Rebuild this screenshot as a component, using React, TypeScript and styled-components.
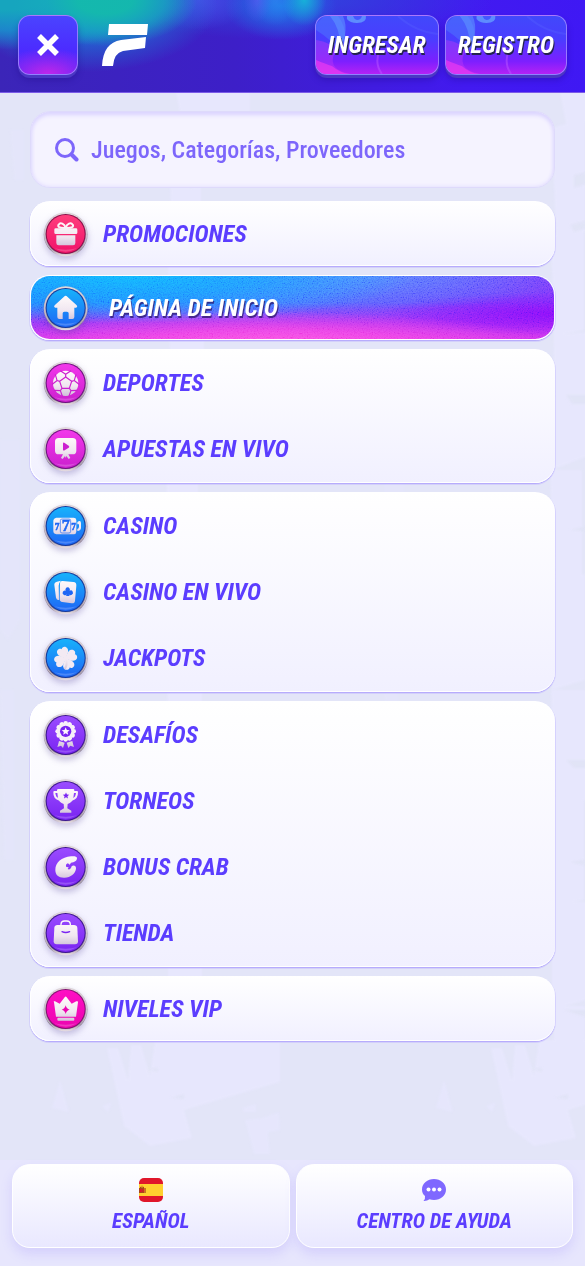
import React, { ReactNode, useId } from 'react';
import styled, { createGlobalStyle, css } from 'styled-components';

const GlobalStyle = createGlobalStyle`
  *, *::before, *::after { box-sizing: border-box; }
  body {
    margin: 0;
    background: #e3e5f8;
    font-family: 'Roboto Condensed', Roboto, sans-serif;
    color: #5b3dff;
  }
  button, input { font: inherit; color: inherit; }
  svg { display: block; flex: none; }
`;

const Page = styled.div`
  position: relative;
  z-index: 0;
  display: flex;
  flex-direction: column;
  min-height: 100vh;
`;

const Backdrop = styled.svg`
  position: absolute;
  inset: 0;
  width: 100%;
  height: 100%;
  z-index: -1;
`;

const Header = styled.header`
  display: flex;
  align-items: center;
  gap: 6px;
  padding: 15px 18px 17px;
  border-bottom: 1px solid #7b5be8;
  background:
    radial-gradient(ellipse 22px 26px at 47% 0, rgba(50, 140, 245, 0.5), transparent),
    radial-gradient(ellipse 22px 26px at 52% 0, rgba(20, 190, 215, 0.85), transparent),
    radial-gradient(ellipse 14px 22px at 44% 0, rgba(90, 85, 240, 0.7), transparent),
    radial-gradient(ellipse 56px 34px at 48% 6px, rgba(26, 130, 232, 0.85), transparent),
    radial-gradient(ellipse 92px 46px at 18% 0, rgba(20, 186, 172, 0.95) 30%, rgba(22, 172, 188, 0.7) 65%, transparent),
    radial-gradient(ellipse 180px 50px at 1% 0, rgba(22, 165, 190, 1) 20%, rgba(24, 150, 205, 0.8) 60%, transparent),
    radial-gradient(ellipse 130px 68px at 15% 4px, rgba(28, 120, 215, 0.9) 40%, transparent),
    radial-gradient(ellipse 50px 30px at 34% 0, rgba(75, 80, 235, 0.8), transparent),
    radial-gradient(ellipse 200px 40px at 50% 0, rgba(45, 80, 225, 0.8), transparent),
    linear-gradient(90deg, #3b25b8, #3d1fc8 40%, #421af0 80%, #3f18f4);
`;

const keycap = css`
  height: 60px;
  border: 1px solid rgba(170, 150, 255, 0.75);
  border-radius: 12px;
  box-shadow: 0 3px 0 #4a38c4, 0 5px 6px rgba(30, 10, 130, 0.35);
  color: #fff;
  cursor: pointer;
`;

const CloseButton = styled.button`
  ${keycap}
  display: grid;
  place-items: center;
  width: 60px;
  padding: 0;
  margin-right: 18px;
  background:
    radial-gradient(ellipse 50px 26px at 50% 100%, #c026ea, rgba(160, 38, 240, 0.6) 55%, transparent),
    linear-gradient(#4a44ff, #4c2bff 60%, #5a28fa);
`;

const HomeLink = styled.a`
  margin-right: auto;
`;

const AccountButton = styled.button`
  ${keycap}
  position: relative;
  padding: 0 12px;
  font-size: 24px;
  font-weight: 700;
  font-style: italic;
  text-shadow: 1px 2px 0 #24224f;
  background: linear-gradient(#4149fb, #4a3dff 40%, #7c1fff 78%, #b422f4);
`;

const Waves = styled.svg`
  position: absolute;
  inset: 0;
  width: 100%;
  height: 100%;
  border-radius: 11px;
`;

const ButtonText = styled.span`
  position: relative;
`;

const Menu = styled.main`
  display: flex;
  flex-direction: column;
  gap: 9px;
  padding: 18px 30px 24px;
`;

const SearchField = styled.label`
  display: flex;
  align-items: center;
  gap: 12px;
  height: 77px;
  margin-bottom: 4px;
  padding: 0 24px;
  border: 1px solid #dedafb;
  border-radius: 20px;
  background: #f5f3ff;
  box-shadow: inset 0 3px 4px #dcd5ff, inset 0 0 4px #dfd9ff;
  color: #7d66fb;
`;

const SearchInput = styled.input`
  flex: 1;
  min-width: 0;
  padding: 0;
  border: 0;
  outline: 0;
  background: none;
  font-size: 24px;
  font-weight: 500;
  &::placeholder { color: inherit; opacity: 1; }
`;

const Group = styled.nav`
  padding: 1px 0;
  border-radius: 20px;
  background: linear-gradient(#fff, #f1f0ff);
  box-shadow: inset 1px 0 0 #fff, inset 0 -1px 0 #fff, 0 1px 0 1px rgba(180, 168, 255, 0.35), 0 1px 0 #b9aefa;
`;

const ItemLink = styled.a<{ $single?: boolean; $active?: boolean }>`
  position: relative;
  display: flex;
  align-items: center;
  gap: 15px;
  height: ${p => (p.$single ? 63 : 66)}px;
  padding: 0 14px;
  font-size: 24px;
  line-height: 28px;
  font-weight: 700;
  font-style: italic;
  text-decoration: none;
  color: #5b3dff;
  ${p => p.$active && css`
    gap: 21px;
    margin: 0 1px;
    padding: 0 13px;
    border-radius: 19px;
    color: #fff;
    text-shadow: 1px 2px 0 rgba(45, 20, 110, 0.75);
    background:
      radial-gradient(ellipse 55% 55% at 46% 112%, #ff58e0, rgba(246, 70, 228, 0.8) 50%, transparent),
      radial-gradient(ellipse 55% 75% at 18% 0, #12b4ff, rgba(20, 165, 255, 0.75) 45%, transparent),
      radial-gradient(ellipse 45% 55% at 60% 0, rgba(85, 135, 255, 0.9), transparent),
      radial-gradient(ellipse 34% 34% at 100% 60%, #8510fb, transparent),
      linear-gradient(transparent 42%, rgba(185, 38, 242, 0.75) 75%, #cf33ee),
      linear-gradient(90deg, #2a6cff, #4b66ff 45%, #7a38fb);
  `}
`;

const ItemText = styled.span`
  position: relative;
`;

const GrainLayer = styled.svg`
  position: absolute;
  inset: 0;
  width: 100%;
  height: 100%;
  border-radius: 19px;
  opacity: 0.22;
  mix-blend-mode: overlay;
`;

const Badge = styled.svg`
  position: relative;
  width: 44px;
  height: 44px;
  overflow: visible;
  filter: drop-shadow(0 3px 3px rgba(70, 50, 140, 0.28));
`;

const Footer = styled.footer`
  display: grid;
  grid-template-columns: 1fr 1fr;
  gap: 6px;
  margin-top: auto;
  padding: 4px 12px 18px;
  background: #e7e6fd;
`;

const FooterButton = styled.button`
  display: flex;
  flex-direction: column;
  align-items: center;
  gap: 7px;
  height: 84px;
  padding: 13px 0 0;
  border: 1px solid #fff;
  border-radius: 18px;
  background: linear-gradient(#fff, #e9e8ff);
  box-shadow: 0 6px 12px rgba(140, 120, 250, 0.2);
  font-size: 21px;
  line-height: 24px;
  font-weight: 700;
  font-style: italic;
  cursor: pointer;
`;

const palettes = {
  red: ['#ff3d7c', '#f0136a', '#8c0d48'],
  blue: ['#17b2fb', '#1f66f5', '#153a9c'],
  magenta: ['#f238ea', '#cc20cf', '#6f1180'],
  violet: ['#9a4cff', '#7a24f2', '#3d1690'],
  pink: ['#ff0fc4', '#ec04b0', '#851070'],
};
type Tone = keyof typeof palettes;

/* Round metal badge. Glyphs are drawn on a 132-unit square centred on 0,0. */
function RoundIcon({ tone, children }: { tone: Tone; children: (light: string, dark: string) => ReactNode }) {
  const id = useId().replace(/[^a-zA-Z0-9]/g, '');
  const [top, bottom, edge] = palettes[tone];
  return (
    <Badge viewBox="-65 -67 132 132" aria-hidden="true">
      <defs>
        <linearGradient id={`r${id}`} x1="0" y1="0" x2="0" y2="1">
          <stop offset="0" stopColor="#dcd3d6" />
          <stop offset="0.5" stopColor="#b3a8ba" />
          <stop offset="0.85" stopColor="#8d8094" />
          <stop offset="1" stopColor="#e9e0e6" />
        </linearGradient>
        <linearGradient id={`f${id}`} x1="0" y1="0" x2="0" y2="1">
          <stop offset="0" stopColor={top} />
          <stop offset="1" stopColor={bottom} />
        </linearGradient>
        <linearGradient id={`g${id}`} gradientUnits="userSpaceOnUse" x1="0" y1="-38" x2="0" y2="38">
          <stop offset="0" stopColor="#fffafa" />
          <stop offset="0.6" stopColor="#f0e6f0" />
          <stop offset="1" stopColor="#cfc0d8" />
        </linearGradient>
      </defs>
      <circle r="66" fill={`url(#r${id})`} />
      <circle r="63" fill="none" stroke="#e8dfe2" strokeWidth="2" opacity="0.8" />
      <circle r="60" cy="-1" fill={edge} />
      <circle r="57" cy="-1" fill={`url(#f${id})`} />
      <path d="M-34 42Q0 62 34 42 0 50-34 42Z" fill="#fff" opacity="0.2" />
      {children(`url(#g${id})`, bottom)}
    </Badge>
  );
}

const star = 'M0-12 3.5-4 12-3.5 5.5 2 7.5 10.500 0 6-7.500 10.500-5.500 2-12-3.500-3.500-4Z';

const GiftIcon = () => (
  <RoundIcon tone="red">{light => <>
    <path d="M0-19C-20-18-25-23-21-29-16-37-4-32 0-19 4-32 16-37 21-29 25-23 20-18 0-19Z" fill="none" stroke={light} strokeWidth="6" />
    <rect x="-34" y="-18" width="69" height="17" rx="4" fill={light} />
    <path d="M-28 3H29V26Q29 33 22 33H-21Q-28 33-28 26Z" fill={light} />
  </>}</RoundIcon>
);
const HomeIcon = () => (
  <RoundIcon tone="blue">{light => (
    <path d="M-5-35Q0-40 5-35L33-9Q37-3 31-2H26V26Q26 32 20 32H9V15Q9 10 4 10H-4Q-9 10-9 15V32H-19Q-25 32-25 26V-2H-31Q-37-3-33-9Z" fill={light} />
  )}</RoundIcon>
);
const BallIcon = () => (
  <RoundIcon tone="magenta">{(light, dark) => <>
    <circle r="38" fill={light} />
    <g fill="none" stroke={dark} strokeWidth="3.500" strokeLinejoin="round">
      <path d="M0-19 18-6 11 15H-11L-18-6Z" />
      {[0, 72, 144, 216, 288].map(angle => (
        <path key={angle} d="M0-19V-27L-16-38M0-27 16-38" transform={`rotate(${angle})`} />
      ))}
    </g>
  </>}</RoundIcon>
);
const LiveIcon = () => (
  <RoundIcon tone="magenta">{(light, dark) => <>
    <path d="M-21-34H21Q32-34 32-23V4Q32 15 21 15H8L14 26 9 29 2 20 0 26-2 20-9 29-14 26-8 15H-21Q-32 15-32 4V-23Q-32-34-21-34Z" fill={light} />
    <path d="M-8-17Q-8-22-3-19L9-11Q13-8 9-5L-3 3Q-8 5-8 1Z" fill={dark} />
  </>}</RoundIcon>
);
const SlotsIcon = () => (
  <RoundIcon tone="blue">{(light, dark) => <>
    <path d="M-28-26H24Q31-26 32-19V16Q31 24 24 24H-28Q-37 22-37 14V-16Q-37-24-28-26Z" fill={light} />
    <path d="M35-13Q46-20 46-9V4Q46 12 35 14V8Q40 6 40 1V-6H35Z" fill={light} />
    <rect x="-16" y="-22" width="31" height="42" rx="5" fill={light} stroke={dark} strokeWidth="2" />
    <g fill={dark} stroke={dark} strokeWidth="1.500" fontFamily="'Liberation Serif', serif" fontWeight="700" fontStyle="normal" textAnchor="middle">
      <text x="-26" y="10" fontSize="28">7</text>
      <text x="0" y="15" fontSize="48">7</text>
      <text x="24" y="10" fontSize="28">7</text>
    </g>
  </>}</RoundIcon>
);
const CardsIcon = () => (
  <RoundIcon tone="blue">{(light, dark) => <>
    <path d="M-26-32-14-35Q-20-30-21-20L-20 23Q-27 24-29 16L-34-22Q-35-30-26-32Z" fill={light} />
    <path d="M-9-34 23-31Q33-30 32-20L28 25Q27 34 18 33L-10 29Q-18 28-18 20L-17-26Q-17-35-9-34Z" fill={light} />
    <path d="M6-15A7 7 0 0 1 12-5 7 7 0 1 1 9 5L12 11H1L4 5A7 7 0 1 1 0-5 7 7 0 0 1 6-15Z" fill={dark} />
  </>}</RoundIcon>
);
const CloverIcon = () => (
  <RoundIcon tone="blue">{light => <>
    {[-24, 66, 156, 246].map(angle => (
      <path key={angle} transform={`rotate(${angle})`} d="M-2 2C-4-7-19-13-17-25-15-35-4-36 0-30 4-36 15-35 17-25 19-13 4-7 2 2Z" fill="#f3eaf3" />
    ))}
    <path d="M-1 2Q3 18-6 31L0 34Q9 18 4 4Z" fill={light} />
  </>}</RoundIcon>
);
const MedalIcon = () => (
  <RoundIcon tone="violet">{(light, dark) => <>
    <path d="M-20 17-3 22-8 38-14 31-25 35Q-22 26-20 17ZM20 17 3 22 8 38 14 31 25 35Q22 26 20 17Z" fill={light} />
    <g transform="translate(0 -12)">
      {Array.from({ length: 12 }, (_, i) => (
        <circle key={i} r="7" cy="-24" transform={`rotate(${i * 30})`} fill="#fbf4fa" />
      ))}
      <circle r="26" fill="#f7eff8" />
      <circle r="17" fill={dark} />
      <path d={star} fill="#fff8fc" />
    </g>
  </>}</RoundIcon>
);
const TrophyIcon = () => (
  <RoundIcon tone="violet">{(light, dark) => <>
    <path d="M-22-28H-34Q-35-9-18-5M22-28H34Q35-9 18-5" fill="none" stroke={light} strokeWidth="6" strokeLinejoin="round" />
    <path d="M-22-37H23Q26-37 26-33L23-10Q20 3 6 8L5 21 17 28V34H-17V28L-5 21-6 8Q-20 3-23-10L-26-33Q-26-37-22-37Z" fill={light} />
    <path d={star} fill={dark} transform="translate(1 -17) scale(.8)" />
  </>}</RoundIcon>
);
const ClawIcon = () => (
  <RoundIcon tone="violet">{light => (
    <path d="M34-27C34-33 26-34 16-33-12-31-31-14-31 8-31 24-20 32-3 31 15 30 29 19 31 4 32-5 23-8 18-3 16 4 11 9 6 5L9 0 2-1C-1-6 2-11 7-12L12-8 16-14C26-14 34-20 34-27Z" fill={light} />
  )}</RoundIcon>
);
const BagIcon = () => (
  <RoundIcon tone="violet">{(light, dark) => <>
    <path d="M-14-22V-28Q-13-37-4-37H4Q13-37 14-28V-22" fill="none" stroke={light} strokeWidth="4" />
    <path d="M-25-25H25Q34-25 35-17L37 24Q37 33 28 33H-27Q-36 33-36 24L-34-17Q-33-25-25-25Z" fill={light} />
    <path d="M-11-5Q0 0 12-5" fill="none" stroke={dark} strokeWidth="4" strokeLinecap="round" />
  </>}</RoundIcon>
);
const CrownIcon = () => (
  <RoundIcon tone="pink">{(light, dark) => <>
    <path d="M-35-21Q-38-26-32-24L-18-17-3-36Q0-41 3-36L18-17 32-24Q38-26 37-21L31 22H-29Z" fill={light} />
    <path d="M0-12Q2-2 12 1 2 3 0 14-2 3-12 1-2-2 0-12Z" fill={dark} />
    <rect x="-25" y="25" width="51" height="9" rx="3" fill={light} />
  </>}</RoundIcon>
);

type Entry = { label: string; Icon: () => ReactNode };
const groups: { name: string; active?: boolean; entries: Entry[] }[] = [
  { name: 'Promociones', entries: [{ label: 'PROMOCIONES', Icon: GiftIcon }] },
  { name: 'Inicio', active: true, entries: [{ label: 'PÁGINA DE INICIO', Icon: HomeIcon }] },
  { name: 'Deportes', entries: [
    { label: 'DEPORTES', Icon: BallIcon },
    { label: 'APUESTAS EN VIVO', Icon: LiveIcon },
  ] },
  { name: 'Casino', entries: [
    { label: 'CASINO', Icon: SlotsIcon },
    { label: 'CASINO EN VIVO', Icon: CardsIcon },
    { label: 'JACKPOTS', Icon: CloverIcon },
  ] },
  { name: 'Recompensas', entries: [
    { label: 'DESAFÍOS', Icon: MedalIcon },
    { label: 'TORNEOS', Icon: TrophyIcon },
    { label: 'BONUS CRAB', Icon: ClawIcon },
    { label: 'TIENDA', Icon: BagIcon },
  ] },
  { name: 'VIP', entries: [{ label: 'NIVELES VIP', Icon: CrownIcon }] },
];

const BrushBackdrop = () => (
  <Backdrop aria-hidden="true">
    <defs>
      <filter id="rough"><feGaussianBlur stdDeviation="1" /></filter>
      <pattern id="brush" width="384" height="1180" patternUnits="userSpaceOnUse">
        <g fill="#e7e7fd" filter="url(#rough)">
          <path d="M176 92H250V118L182 124ZM168 128 201 118V232L172 240ZM167 235 200 230V330L170 336ZM170 335 204 332V456L168 470ZM166 470H198V575L170 580ZM168 580 201 574V680L168 690ZM167 690H202V800L170 804ZM168 802 200 796V900L166 906ZM168 902H202V1000L168 1010ZM170 1006H201V1040H170Z" />
          <path d="M155 1040H280V1082L184 1110 192 1138 150 1146 124 1126 107 1048H118L128 1080 131 1045H141L150 1076Z" />
          <path d="M60 1080 69 1112 52 1108ZM245 1120 262 1118 279 1112 280 1130 268 1132 270 1154H254ZM242 1108 256 1104V1112H244ZM102 1106 112 1102 108 1112Z" opacity="0.7" />
          <path d="M0 440H20V620L8 640 0 630ZM10 130H24V180H14ZM0 690H14V860H4Z" opacity="0.4" />
        </g>
        <g fill="#dfe2f4" opacity="0.7" filter="url(#rough)">
          <path d="M190 175 216 168V180L190 188ZM186 225 210 218V226L190 232ZM182 395H210V404H188ZM186 530 210 524V532ZM182 760H214V768H190ZM186 862 210 858V868ZM180 1010H210V1020ZM171 1098 184 1094V1099ZM148 1069 158 1068V1072Z" />
        </g>
      </pattern>
    </defs>
    <rect width="100%" height="100%" fill="url(#brush)" />
  </Backdrop>
);

const Grain = () => (
  <GrainLayer aria-hidden="true">
    <filter id="grain">
      <feTurbulence type="fractalNoise" baseFrequency="0.8" numOctaves="2" />
      <feColorMatrix type="matrix" values="2 0 0 0 -0.5  2 0 0 0 -0.5  2 0 0 0 -0.5  0 0 0 0 1" />
    </filter>
    <rect width="100%" height="100%" filter="url(#grain)" />
  </GrainLayer>
);

const ButtonWaves = () => (
  <Waves viewBox="0 0 122 58" preserveAspectRatio="none" aria-hidden="true">
    <path d="M8 0H22Q30 10 29 23 28 30 23 35 16 24 0 14V8Z" fill="#4f86ff" opacity="0.4" />
    <path d="M14 0H27Q31 8 29 20L25 32Q24 12 14 0Z" fill="#62a0ff" opacity="0.5" />
    <path d="M31 0H50Q51 7 41 7 34 7 31 3Z" fill="#69a9ff" opacity="0.7" />
    <path d="M37 0H46Q45 4 41 4 38 3 37 0Z" fill="#4457ff" />
    <path d="M0 24Q16 26 19 36 14 46 20 52 26 57 36 58H0Z" fill="#c23cf5" opacity="0.4" />
    <path d="M0 44Q10 48 16 50 24 57 34 58H0Z" fill="#f03bf0" opacity="0.65" />
    <path d="M64 34Q58 47 66 58" fill="none" stroke="#ba55ff" strokeWidth="2" opacity="0.5" />
    <path d="M82 0Q100 16 122 18" fill="none" stroke="#5866ff" strokeWidth="2" opacity="0.3" />
  </Waves>
);

export default function App() {
  return (
    <Page>
      <GlobalStyle />
      <BrushBackdrop />
      <Header>
        <CloseButton type="button" aria-label="Cerrar menú">
          <svg width="24" height="24" viewBox="0 0 24 24" aria-hidden="true">
            <path d="M3 3 21 21M21 3 3 21" stroke="#fff" strokeWidth="5.500" />
          </svg>
        </CloseButton>
        <HomeLink href="#inicio" aria-label="Inicio">
          <svg width="46" height="42" viewBox="0 0 46 42" fill="#fff" aria-hidden="true">
            <path d="M7 0H46L45 11H6Z" />
            <path d="M44 13 43 24 21 27Q12 29 11 42H0C1 26 7 18 19 16Z" />
          </svg>
        </HomeLink>
        <AccountButton type="button"><ButtonWaves /><ButtonText>INGRESAR</ButtonText></AccountButton>
        <AccountButton type="button"><ButtonWaves /><ButtonText>REGISTRO</ButtonText></AccountButton>
      </Header>

      <Menu>
        <SearchField>
          <svg width="24" height="24" viewBox="0 0 24 24" fill="none" stroke="currentColor" aria-hidden="true">
            <circle cx="10" cy="10" r="8.500" strokeWidth="3" />
            <path d="M16.500 16.500 21.500 21.500" strokeWidth="4" strokeLinecap="round" />
          </svg>
          <SearchInput type="text" aria-label="Buscar" placeholder="Juegos, Categorías, Proveedores" />
        </SearchField>
        {groups.map(({ name, active, entries }) => (
          <Group key={name} aria-label={name}>
            {entries.map(({ label, Icon }) => (
              <ItemLink key={label} href="#" $single={entries.length === 1} $active={active} aria-current={active ? 'page' : undefined}>
                {active && <Grain />}
                <Icon />
                <ItemText>{label}</ItemText>
              </ItemLink>
            ))}
          </Group>
        ))}
      </Menu>

      <Footer>
        <FooterButton type="button">
          <svg width="24" height="24" viewBox="0 0 24 24" aria-hidden="true">
            <clipPath id="flag"><rect width="24" height="24" rx="5" /></clipPath>
            <g clipPath="url(#flag)">
              <rect width="24" height="24" fill="#e0162b" />
              <rect y="6" width="24" height="12" fill="#ffd02f" />
              <path d="M0 10H1V9H5V10H7V15H0Z" fill="#a8451c" />
              <path d="M1 11H3V14H1ZM4 11H5V14H4Z" fill="#e0162b" />
              <path d="M2 8H4V9H2ZM6 10V15" fill="#c8861c" stroke="#e8a824" />
            </g>
          </svg>
          ESPAÑOL
        </FooterButton>
        <FooterButton type="button">
          <svg width="24" height="24" viewBox="0 0 24 24" aria-hidden="true">
            <path d="M12 1C18.500 1 24 5.500 24 11.500S18.500 22 12 22Q9.500 22 7.500 21.200 5 23.200 1.500 23 3.500 20.500 3 18 0 15.500 0 11.500C0 5.500 5.500 1 12 1Z" fill="#7f68ff" />
            <g fill="#fff"><circle cx="6.500" cy="11.500" r="2" /><circle cx="12" cy="11.500" r="2" /><circle cx="17.500" cy="11.500" r="2" /></g>
          </svg>
          CENTRO DE AYUDA
        </FooterButton>
      </Footer>
    </Page>
  );
}
